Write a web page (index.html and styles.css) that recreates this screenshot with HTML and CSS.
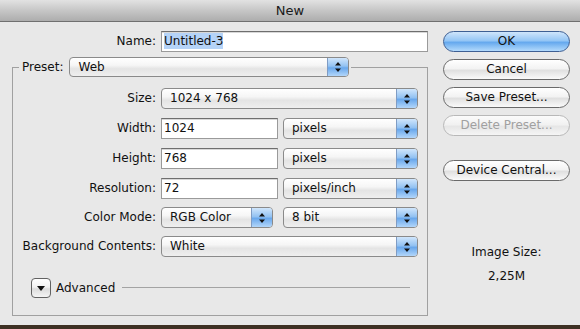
FILE: index.html
```html
<!DOCTYPE html>
<html>
<head>
<meta charset="utf-8">
<link rel="stylesheet" href="styles.css">
</head>
<body>
<div class="window">
  <div class="titlebar">New</div>
  <div class="content">
    <div class="main">
      <div class="name-row">
        <span class="lbl name-lbl">Name:</span>
        <div class="field name-field"><span class="selected">Untitled-3</span></div>
      </div>
      <fieldset class="group">
        <legend class="preset">
          <div class="preset-inner">
            <span class="preset-lbl">Preset:</span>
            <div class="popup preset-popup"><span class="val">Web</span><span class="arrows"><svg width="20" height="20" viewBox="0 0 20 20"><path d="M7 8.5 L10 5 L13 8.5 Z M7 11.5 L10 15 L13 11.5 Z" fill="#111"/></svg></span></div>
          </div>
        </legend>
        <div class="grid">
          <span class="lbl">Size:</span>
          <div class="popup span2"><span class="val">1024 x 768</span><span class="arrows"><svg width="20" height="20" viewBox="0 0 20 20"><path d="M7 8.5 L10 5 L13 8.5 Z M7 11.5 L10 15 L13 11.5 Z" fill="#111"/></svg></span></div>

          <span class="lbl">Width:</span>
          <div class="field">1024</div>
          <div class="popup"><span class="val">pixels</span><span class="arrows"><svg width="20" height="20" viewBox="0 0 20 20"><path d="M7 8.5 L10 5 L13 8.5 Z M7 11.5 L10 15 L13 11.5 Z" fill="#111"/></svg></span></div>

          <span class="lbl">Height:</span>
          <div class="field">768</div>
          <div class="popup"><span class="val">pixels</span><span class="arrows"><svg width="20" height="20" viewBox="0 0 20 20"><path d="M7 8.5 L10 5 L13 8.5 Z M7 11.5 L10 15 L13 11.5 Z" fill="#111"/></svg></span></div>

          <span class="lbl">Resolution:</span>
          <div class="field">72</div>
          <div class="popup"><span class="val">pixels/inch</span><span class="arrows"><svg width="20" height="20" viewBox="0 0 20 20"><path d="M7 8.5 L10 5 L13 8.5 Z M7 11.5 L10 15 L13 11.5 Z" fill="#111"/></svg></span></div>

          <span class="lbl tight">Color Mode:</span>
          <div class="popup color-popup tight"><span class="val">RGB Color</span><span class="arrows"><svg width="20" height="20" viewBox="0 0 20 20"><path d="M7 8.5 L10 5 L13 8.5 Z M7 11.5 L10 15 L13 11.5 Z" fill="#111"/></svg></span></div>
          <div class="popup tight"><span class="val">8 bit</span><span class="arrows"><svg width="20" height="20" viewBox="0 0 20 20"><path d="M7 8.5 L10 5 L13 8.5 Z M7 11.5 L10 15 L13 11.5 Z" fill="#111"/></svg></span></div>

          <span class="lbl tight">Background Contents:</span>
          <div class="popup span2 tight"><span class="val">White</span><span class="arrows"><svg width="20" height="20" viewBox="0 0 20 20"><path d="M7 8.5 L10 5 L13 8.5 Z M7 11.5 L10 15 L13 11.5 Z" fill="#111"/></svg></span></div>
        </div>
        <div class="advanced">
          <span class="disclosure"><svg width="18" height="18" viewBox="0 0 18 18"><path d="M5 7 L13 7 L9 12 Z" fill="#111"/></svg></span>
          <span class="adv-text">Advanced</span>
          <span class="adv-line"></span>
        </div>
      </fieldset>
    </div>
    <div class="side">
      <div class="btn default">OK</div>
      <div class="btn">Cancel</div>
      <div class="btn">Save Preset...</div>
      <div class="btn disabled">Delete Preset...</div>
      <div class="btn device">Device Central...</div>
      <div class="info">
        <div class="info-title">Image Size:</div>
        <div class="info-value">2,25M</div>
      </div>
    </div>
  </div>
</div>
</body>
</html>
```

FILE: styles.css
```css
html, body {
  margin: 0;
  padding: 0;
}
body {
  width: 580px;
  height: 329px;
  background: #3e3124;
  font-family: "DejaVu Sans", "Liberation Sans", sans-serif;
  font-size: 12px;
  color: #111;
  overflow: hidden;
}
.window {
  height: 325px;
  background: #e8e8e8;
  display: flex;
  flex-direction: column;
}
.titlebar {
  height: 21px;
  line-height: 22px;
  text-align: center;
  font-size: 13px;
  color: #1a1a1a;
  background: linear-gradient(#e2e2e2, #c6c6c6 50%, #adadad);
  border-bottom: 1px solid #707070;
}
.content {
  display: flex;
  padding-top: 9px;
}
.main {
  margin-left: 12px;
  width: 416px;
}
.name-row {
  display: flex;
  align-items: center;
  height: 21px;
}
.lbl {
  text-align: right;
  white-space: nowrap;
  line-height: 21px;
}
.name-lbl {
  width: 144px;
  margin-right: 5px;
}
.field {
  box-sizing: border-box;
  height: 21px;
  background: #fff;
  border: 1px solid #9a9a9a;
  border-top-color: #6e6e6e;
  box-shadow: inset 0 1px 0 #d8d8d8;
  padding-left: 2px;
  line-height: 19px;
  white-space: nowrap;
}
.name-field {
  width: 267px;
}
.selected {
  background: #b5d3f7;
  padding: 1px 0;
}
.group {
  margin: 5px 0 0 0;
  padding: 0;
  width: 416px;
  box-sizing: border-box;
  border: 1px solid #a0a0a0;
  min-width: 0;
}
.preset {
  margin-left: 6px;
  padding: 0 2px;
  font-size: 0;
}
.preset-inner {
  display: flex;
  align-items: center;
  height: 20px;
  font-size: 12px;
}
.preset-lbl {
  margin-left: 1px;
  margin-right: 6px;
}
.popup {
  box-sizing: border-box;
  height: 21px;
  display: flex;
  align-items: stretch;
  border: 1px solid #8a8a8a;
  border-radius: 4px;
  overflow: hidden;
  background: linear-gradient(#ffffff, #f6f6f6 40%, #e4e4e4 60%, #efefef);
  white-space: nowrap;
}
.preset-popup {
  width: 280px;
  height: 20px;
}
.popup .val {
  flex: 1;
  padding-left: 8px;
  line-height: 19px;
}
.popup .arrows {
  width: 20px;
  flex: none;
  display: flex;
  align-items: center;
  justify-content: center;
  border-left: 1px solid #7f9cc4;
  background: linear-gradient(#d0e6fc, #93c2f2 45%, #6aa8ec 55%, #b2d6fa);
}
.popup .arrows svg {
  display: block;
}
.grid {
  display: grid;
  grid-template-columns: 143px 117px 135px;
  column-gap: 5px;
  row-gap: 9px;
  padding-top: 11px;
  align-items: center;
}
.span2 {
  grid-column: 2 / 4;
}
.color-popup {
  width: 112px;
}
.tight {
  margin-top: -1px;
}
.advanced {
  display: flex;
  align-items: center;
  margin-top: 21px;
  padding: 0 17px 17px 18px;
  height: 20px;
}
.disclosure {
  box-sizing: border-box;
  width: 20px;
  height: 20px;
  border: 1px solid #626262;
  border-radius: 4px;
  background: linear-gradient(#ffffff, #f2f2f2 45%, #dcdcdc 55%, #f4f4f4);
  display: flex;
  align-items: center;
  justify-content: center;
}
.disclosure svg {
  display: block;
}
.adv-text {
  margin-left: 5px;
}
.adv-line {
  flex: 1;
  height: 1px;
  background: #a3a3a3;
  margin-left: 7px;
  margin-top: -1px;
}
.side {
  margin-left: 15px;
  width: 127px;
  display: flex;
  flex-direction: column;
  gap: 7px;
}
.btn {
  box-sizing: border-box;
  height: 21px;
  line-height: 19px;
  text-align: center;
  border: 1px solid #6a6a6a;
  border-radius: 11px;
  background: linear-gradient(#ffffff, #f3f3f3 45%, #e0e0e0 55%, #fafafa);
  white-space: nowrap;
}
.btn.default {
  border-color: #3e5f93;
  background: linear-gradient(#cfe5fb, #95c6f5 45%, #66a9ee 55%, #b3dafc);
}
.btn.disabled {
  color: #a0a0a0;
  border-color: #b8b8b8;
  background: linear-gradient(#fbfbfb, #f1f1f1 45%, #e6e6e6 55%, #f5f5f5);
}
.btn.device {
  margin-top: 17px;
}
.info {
  margin-top: 57px;
  text-align: center;
  line-height: 15px;
}
.info-value {
  margin-top: 9px;
}
```
